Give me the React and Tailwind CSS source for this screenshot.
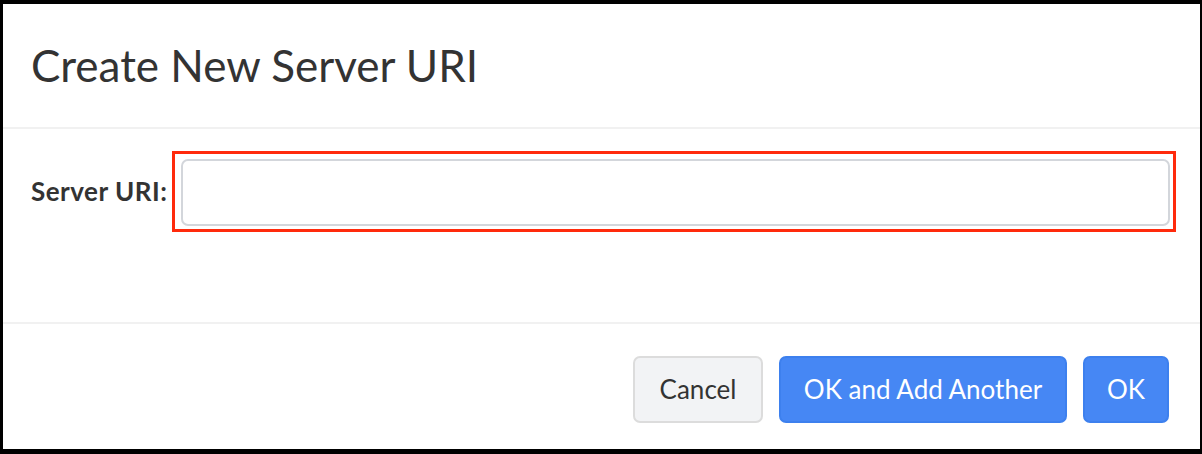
import React, { useState } from 'react';

const App = () => {
  const [uri, setUri] = useState('');

  return (
    <div className="w-[1202px] h-[454px] bg-black pl-[3px] pt-[4px] pr-[2px] pb-[5px] font-['Lato',sans-serif] text-[#333]">
      <div className="flex flex-col h-full bg-white">
        <div className="h-[125px] flex items-center pl-[28px] border-b-2 border-[#f1f1f1]">
          <h4 className="text-[44px] font-normal leading-none -mt-[2px]">Create New Server URI</h4>
        </div>

        <div className="h-[195px] pt-[22px] border-b-2 border-[#f1f1f1]">
          <div className="flex items-center">
            <label className="w-[169px] pl-[28px] text-[26px] font-bold tracking-[0.5px] whitespace-nowrap">Server URI:</label>
            <div className="border-[3px] border-[#ff2a0c] pl-[6px] pr-[3px] pt-[5px] pb-[3px] w-[1004px]">
              <input
                type="text"
                value={uri}
                onChange={(e) => setUri(e.target.value)}
                className="block w-full h-[67px] rounded-[7px] border-2 border-[#d3d6db] bg-white px-3 text-[22px] outline-none"
              />
            </div>
          </div>
        </div>

        <div className="flex-1 flex items-start justify-end gap-[16px] pt-[32px] pr-[31px]">
          <button className="h-[67px] w-[130px] rounded-[7px] border-2 border-[#dcdcdc] bg-[#f2f3f5] text-[26px] text-[#333]">
            Cancel
          </button>
          <button className="h-[67px] w-[288px] rounded-[7px] border-2 border-[#3d80ee] bg-[#4687f4] text-[26px] text-white">
            OK and Add Another
          </button>
          <button className="h-[67px] w-[86px] rounded-[7px] border-2 border-[#3d80ee] bg-[#4687f4] text-[26px] text-white">
            OK
          </button>
        </div>
      </div>
    </div>
  );
};

export default App;
